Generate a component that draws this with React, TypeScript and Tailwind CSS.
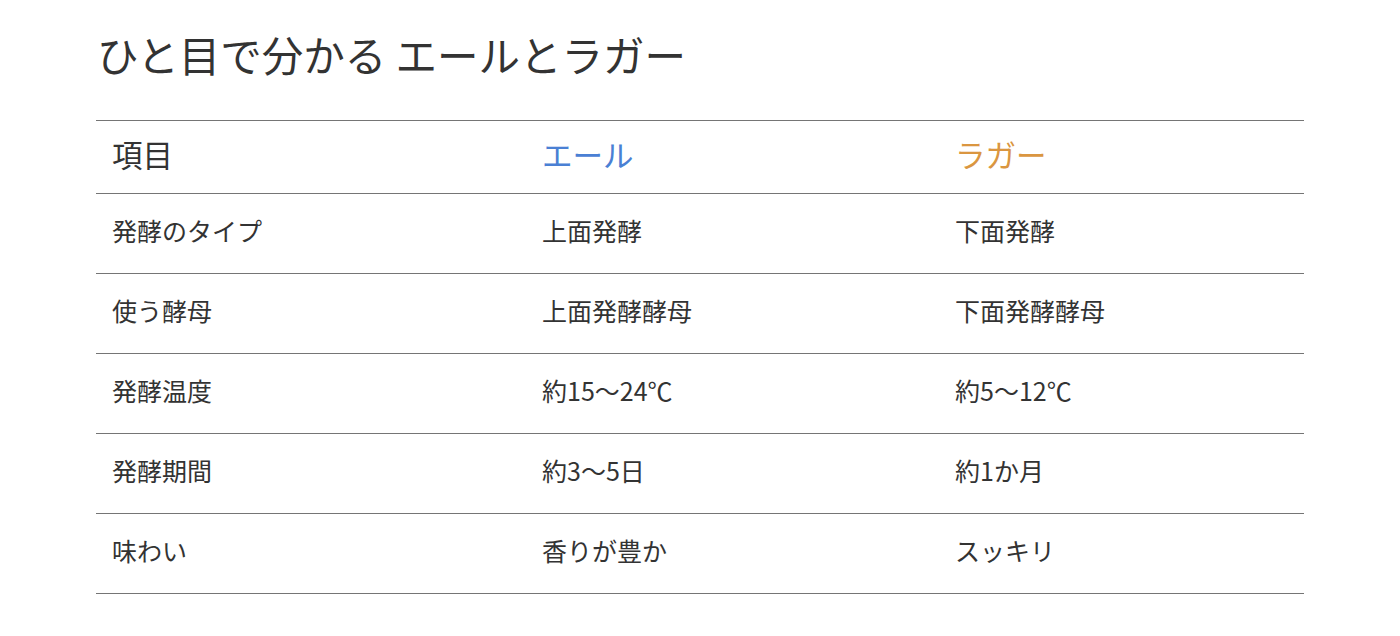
const rows = [
  { label: '発酵のタイプ', ale: '上面発酵', lager: '下面発酵' },
  { label: '使う酵母', ale: '上面発酵酵母', lager: '下面発酵酵母' },
  { label: '発酵温度', ale: '約15〜24℃', lager: '約5〜12℃' },
  { label: '発酵期間', ale: '約3〜5日', lager: '約1か月' },
  { label: '味わい', ale: '香りが豊か', lager: 'スッキリ' },
]

export default function App() {
  return (
    <div className="min-h-screen bg-white pl-[96px] pt-[26px] text-[#333] font-['Noto_Sans_CJK_JP',sans-serif]">
      <h1 className="pl-[1px] text-[41.5px] leading-[56px] font-normal">ひと目で分かる エールとラガー</h1>
      <table className="mt-[38px] w-[1208px] border-collapse text-left">
        <thead>
          <tr className="h-[73px] border-y border-[#757575]">
            <th className="w-[430px] px-4 pb-[4px] text-[30.5px] font-normal">項目</th>
            <th className="w-[413px] px-4 pb-[4px] text-[30.5px] font-normal text-[#4a80d4]">エール</th>
            <th className="px-4 pb-[4px] text-[30.5px] font-normal text-[#da9640]">ラガー</th>
          </tr>
        </thead>
        <tbody>
          {rows.map((r) => (
            <tr key={r.label} className="h-[80px] border-b border-[#757575] text-[25px]">
              <td className="px-4 pb-[6px]">{r.label}</td>
              <td className="px-4 pb-[6px]">{r.ale}</td>
              <td className="px-4 pb-[6px]">{r.lager}</td>
            </tr>
          ))}
        </tbody>
      </table>
    </div>
  )
}
